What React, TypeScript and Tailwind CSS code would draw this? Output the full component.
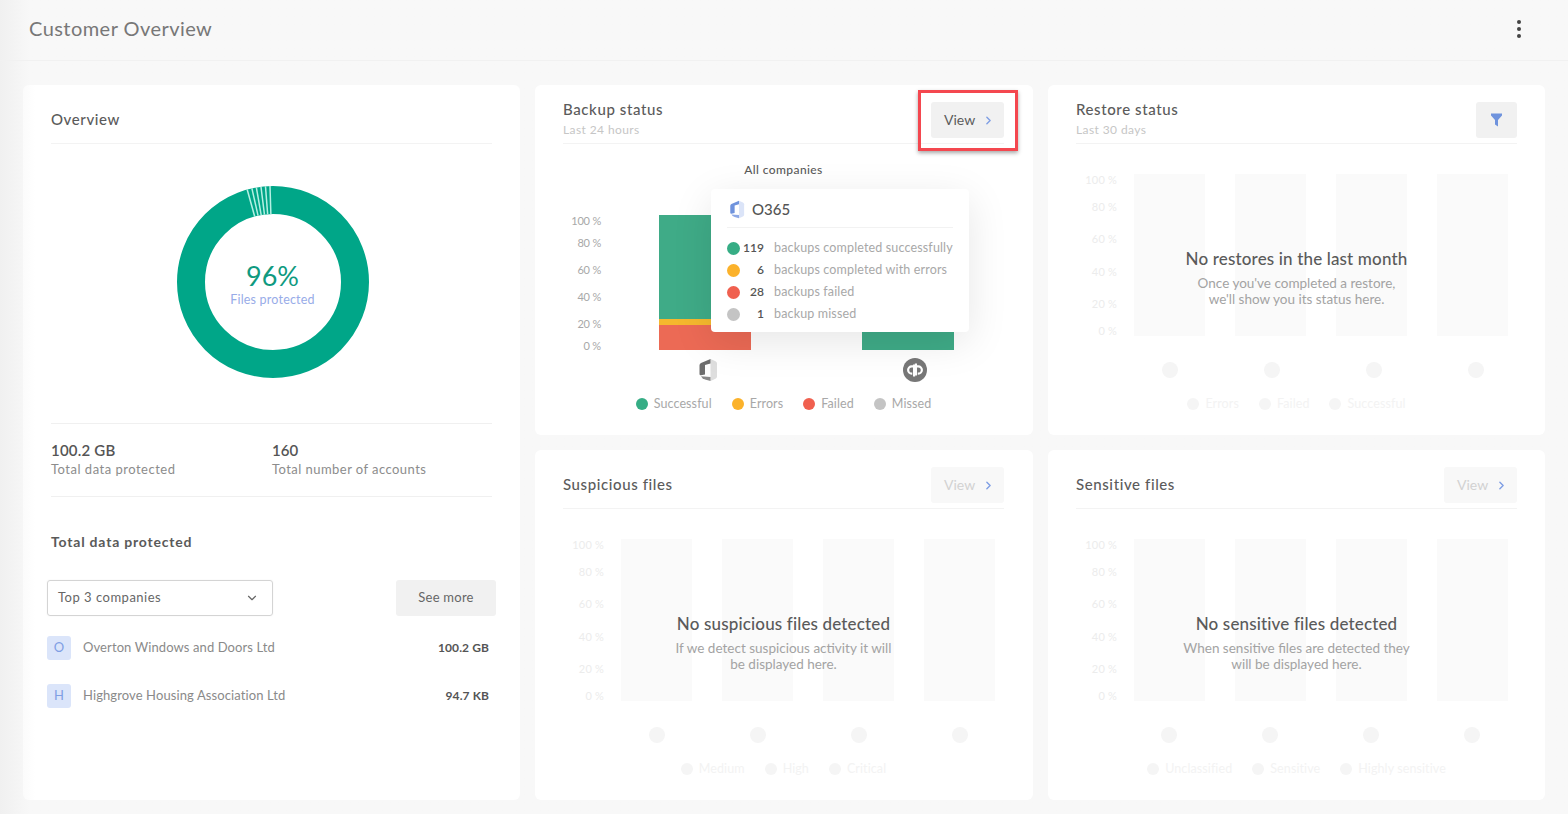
import React from "react";
import { ChevronDown, ChevronRight } from "lucide-react";

function OfficeIcon({ dark, mid, light, className }: { dark: string; mid: string; light: string; className: string }) {
  return (
    <svg viewBox="0 0 20 24" className={className}>
      <path d="M12.5 1 L17.5 3.2 Q19 4 19 5.5 V18.5 Q19 20 17.5 20.8 L12.5 23 Z" fill={light} />
      <path d="M12.5 1 L3 5 Q1.5 5.7 1.5 7.2 V16 Q1.5 17.5 3 17.3 L7 16.5 V7 L12.5 5.5 Z" fill={dark} />
      <path d="M3 18.2 L12.5 19 V23 L7 21.5 Q4 20.5 3 18.2 Z" fill={mid} />
    </svg>
  );
}

function Donut() {
  const angles = [1.8, 4.5, 7.2, 10, 12.7, 15.6];
  return (
    <svg viewBox="0 0 192 192" className="w-[192px] h-[192px]">
      <circle cx="96" cy="96" r="82" fill="none" stroke="#00a688" strokeWidth="28" />
      {angles.map((a) => {
        const t = (a * Math.PI) / 180;
        return (
          <line
            key={a}
            x1={96 - 68 * Math.sin(t)}
            y1={96 - 68 * Math.cos(t)}
            x2={96 - 96 * Math.sin(t)}
            y2={96 - 96 * Math.cos(t)}
            stroke="#b4f0e3"
            strokeWidth="1.5"
          />
        );
      })}
    </svg>
  );
}

function Header({ title, sub, children }: { title: string; sub?: string; children?: React.ReactNode }) {
  return (
    <div className="h-[42px] flex justify-between items-start border-b border-[#f3f3f3]">
      <div className={sub ? "-mt-[1px]" : "h-[34px] flex items-center"}>
        <div className="text-[15px] leading-4 text-[#5b5b5b] tracking-[0.6px] font-medium">{title}</div>
        {sub && <div className="mt-[5px] text-[12px] leading-4 text-[#c6c6c6] tracking-[0.4px]">{sub}</div>}
      </div>
      {children}
    </div>
  );
}

function ViewButton({ muted }: { muted?: boolean }) {
  return (
    <div
      className={
        muted
          ? "w-[73px] h-[36px] rounded-[3px] bg-[#f8f8f8] flex items-center pl-[13px] pb-[2px] gap-[7px] text-[14px] text-[#d2d2d2]"
          : "w-[73px] h-[36px] rounded-[3px] bg-[#f1f1f1] flex items-center pl-[13px] pb-[2px] gap-[7px] text-[14px] text-[#5c5c5c]"
      }
    >
      <span>View</span>
      <ChevronRight size={13} color="#7f9ee4" strokeWidth={2.6} className="mt-[2px]" />
    </div>
  );
}

function Axis({ light, width }: { light?: boolean; width: string }) {
  const cls = light ? "text-[#ececec] tracking-[0.2px]" : "text-[#a8a8a8] tracking-[-0.2px]";
  const rows = light
    ? [
        ["100 %", "mt-0"],
        ["80 %", "mt-[15px]"],
        ["60 %", "mt-[20px]"],
        ["40 %", "mt-[21px]"],
        ["20 %", "mt-[20px]"],
        ["0 %", "mt-[15px]"],
      ]
    : [
        ["100 %", "mt-0"],
        ["80 %", "mt-[10px]"],
        ["60 %", "mt-[15px]"],
        ["40 %", "mt-[15px]"],
        ["20 %", "mt-[15px]"],
        ["0 %", "mt-[10px]"],
      ];
  return (
    <div className={`${width} flex flex-col items-end text-[11px] leading-3 ${cls}`}>
      {rows.map(([t, m]) => (
        <div key={t} className={m}>
          {t}
        </div>
      ))}
    </div>
  );
}

function Legend({ items, text }: { items: [string, string][]; text: string }) {
  return (
    <div className="flex justify-center gap-[20px] h-4">
      {items.map(([label, dot]) => (
        <div key={label} className="flex items-center gap-[6px]">
          <span className={`w-3 h-3 rounded-full ${dot}`} />
          <span className={`text-[12.5px] leading-4 tracking-[0.1px] ${text}`}>{label}</span>
        </div>
      ))}
    </div>
  );
}

function GhostChart({
  dotClass,
  legend,
  title,
  lines,
}: {
  dotClass: string;
  legend: string[];
  title: string;
  lines: string[];
}) {
  return (
    <div className="relative pt-[30px]">
      <div className="flex h-[162px]">
        <Axis light width="w-[41px]" />
        <div className="ml-[17px] flex gap-[30px]">
          {[0, 1, 2, 3].map((i) => (
            <div key={i} className="w-[71px] h-full bg-[#fafafa]" />
          ))}
        </div>
      </div>
      <div className={dotClass}>
        {[0, 1, 2, 3].map((i) => (
          <span key={i} className="w-4 h-4 rounded-full bg-[#f5f5f5]" />
        ))}
      </div>
      <div className="mt-[18px]">
        <Legend items={legend.map((l) => [l, "bg-[#f5f5f5]"] as [string, string])} text="text-[#f3f3f3]" />
      </div>
      <div className="absolute left-0 right-0 top-[105px] flex flex-col items-center text-center">
        <div className="text-[17px] leading-[20px] text-[#5a5a5a] tracking-[0.15px] font-medium">{title}</div>
        <div className="mt-[6px] text-[13.5px] leading-4 text-[#a3a3a3]">
          {lines.map((l) => (
            <div key={l}>{l}</div>
          ))}
        </div>
      </div>
    </div>
  );
}

function TipRow({ dot, n, text }: { dot: string; n: string; text: string }) {
  return (
    <div className="h-[22px] flex items-center whitespace-nowrap">
      <span className={`w-[13px] h-[13px] shrink-0 rounded-full ${dot}`} />
      <span className="w-[24px] shrink-0 text-right text-[12px] font-semibold text-[#555]">{n}</span>
      <span className="ml-[10px] text-[12.5px] text-[#a8a8a8] tracking-[0.15px]">{text}</span>
    </div>
  );
}

function Company({ letter, name, size }: { letter: string; name: string; size: string }) {
  return (
    <div className="h-[24px] flex items-center -ml-1 mr-[3px]">
      <div className="w-[24px] h-[24px] rounded-[3px] bg-[#dbe5fa] flex items-center justify-center text-[13px] text-[#7f9ee4]">
        {letter}
      </div>
      <div className="ml-3 text-[13px] text-[#8a8a8a] tracking-[0.1px]">{name}</div>
      <div className="ml-auto text-[12px] font-bold text-[#555] tracking-[0.1px]">{size}</div>
    </div>
  );
}

export default function App() {
  return (
    <div className="w-full h-[814px] flex flex-col overflow-hidden bg-linear-to-r from-[#f0f0f0] to-[#f8f8f8] to-[30px] font-['Lato',sans-serif]">
      <div className="h-[61px] shrink-0 border-b border-[#f1f1f1] pl-[29px] pr-[47px] pb-[2px] flex items-center justify-between">
        <div className="mb-[2px] text-[20px] text-[#777] tracking-[0.45px]">Customer Overview</div>
        <div className="flex flex-col gap-[3px]">
          <span className="w-1 h-1 rounded-full bg-[#444]" />
          <span className="w-1 h-1 rounded-full bg-[#444]" />
          <span className="w-1 h-1 rounded-full bg-[#444]" />
        </div>
      </div>

      <div className="pt-[24px] pl-[23px] grid grid-cols-[497px_498px_497px] grid-rows-[350px_350px] gap-[15px]">
        {/* Overview */}
        <div className="row-span-2 bg-linear-to-r from-[#fbfbfb] to-white to-[12px] rounded-[6px] pt-[17px] px-[28px]">
          <Header title="Overview">
            <div className="h-[36px]" />
          </Header>
          <div className="h-[280px] pb-[4px] pl-[2px] flex items-center justify-center border-b border-[#f0f0f0]">
            <div className="relative">
              <Donut />
              <div className="absolute inset-0 flex flex-col items-center justify-center">
                <div className="text-[27px] leading-[30px] text-[#0f9a80] mt-[4px]">96%</div>
                <div className="mt-[2px] text-[12.5px] leading-[14px] text-[#98ace8] tracking-[0.2px]">Files protected</div>
              </div>
            </div>
          </div>
          <div className="h-[73px] flex border-b border-[#f0f0f0] pt-[17px]">
            <div className="w-[221px]">
              <div className="text-[15px] leading-[18px] font-semibold text-[#555] tracking-[0.2px]">100.2 GB</div>
              <div className="mt-[2px] text-[13px] leading-4 text-[#8c8c8c] tracking-[0.5px]">Total data protected</div>
            </div>
            <div>
              <div className="text-[15px] leading-[18px] font-semibold text-[#555]">160</div>
              <div className="mt-[2px] text-[13px] leading-4 text-[#8c8c8c] tracking-[0.45px]">Total number of accounts</div>
            </div>
          </div>
          <div className="mt-[36px] text-[14px] leading-[18px] font-bold text-[#5a5a5a] tracking-[0.8px]">Total data protected</div>
          <div className="mt-[29px] flex justify-between -mx-1">
            <div className="w-[226px] h-[36px] border border-[#d4d4d4] rounded-[3px] flex items-center justify-between pl-[10px] pr-[13px] text-[13px] text-[#666] tracking-[0.5px] shadow-[0_0_2px_rgba(0,0,0,0.06)]">
              <span>Top 3 companies</span>
              <ChevronDown size={14} color="#666" />
            </div>
            <div className="w-[100px] h-[36px] bg-[#f1f1f1] rounded-[3px] flex items-center justify-center text-[13px] text-[#666] tracking-[0.25px]">
              See more
            </div>
          </div>
          <div className="mt-[20px] flex flex-col gap-[24px]">
            <Company letter="O" name="Overton Windows and Doors Ltd" size="100.2 GB" />
            <Company letter="H" name="Highgrove Housing Association Ltd" size="94.7 KB" />
          </div>
        </div>

        {/* Backup status */}
        <div className="relative bg-white rounded-[6px] pt-[17px] pl-[28px] pr-[29px]">
          <Header title="Backup status" sub="Last 24 hours">
            <ViewButton />
          </Header>
          <div className="relative pt-[18px]">
            <div className="h-4 text-center text-[12px] leading-4 font-medium text-[#5a5a5a] tracking-[0.4px]">All companies</div>
            <div className="mt-[37px] flex h-[135px]">
              <Axis width="w-[38px]" />
              <div className="ml-[58px] flex items-end gap-[111px]">
                <div className="w-[92px] h-full flex flex-col">
                  <div className="h-[104px] bg-[#3fab87]" />
                  <div className="h-[6px] bg-[#f5b82e]" />
                  <div className="h-[25px] bg-[#ec6a55]" />
                </div>
                <div className="w-[92px] h-full bg-[#3fab87]" />
              </div>
            </div>
            <div className="mt-[8px] h-6 flex">
              <div className="ml-[133px] w-6 h-6 flex items-center justify-center">
                <OfficeIcon dark="#6e6e6e" mid="#8a8a8a" light="#dedede" className="w-[20px] h-[24px]" />
              </div>
              <div className="ml-[183px] w-6 h-6 rounded-full bg-[#777] flex items-center justify-center">
                <svg viewBox="0 0 24 24" className="w-[22px] h-[22px]" fill="none" stroke="#fff" strokeWidth="2.4">
                  <path d="M11 6V19M11 8H8.5a4 4 0 0 0 0 8H9" />
                  <path d="M13 5V18M13 8H15.5a4 4 0 0 1 0 8H15" />
                </svg>
              </div>
            </div>
            <div className="mt-[14px]">
              <Legend
                text="text-[#a8a8a8]"
                items={[
                  ["Successful", "bg-[#36ad85]"],
                  ["Errors", "bg-[#fbb22b]"],
                  ["Failed", "bg-[#f0604f]"],
                  ["Missed", "bg-[#c4c4c4]"],
                ]}
              />
            </div>
            <div className="absolute left-[148px] top-[45px] w-[258px] h-[143px] bg-white rounded-[4px] shadow-[0_10px_40px_rgba(0,0,0,0.1)] px-[16px]">
              <div className="h-[39px] pt-[3px] flex items-center border-b border-[#f2f2f2] gap-[7px] pl-[2px]">
                <OfficeIcon dark="#6f93dd" mid="#8ea9e6" light="#dbe4f8" className="w-[16px] h-[19px]" />
                <span className="text-[15px] font-medium text-[#555]">O365</span>
              </div>
              <div className="mt-[9px]">
                <TipRow dot="bg-[#36ad85]" n="119" text="backups completed successfully" />
                <TipRow dot="bg-[#fbb22b]" n="6" text="backups completed with errors" />
                <TipRow dot="bg-[#f0604f]" n="28" text="backups failed" />
                <TipRow dot="bg-[#c4c4c4]" n="1" text="backup missed" />
              </div>
            </div>
          </div>
          <div className="absolute left-[383px] top-[5px] w-[100px] h-[61px] border-[3px] border-[#f4474f] shadow-[0_2px_4px_rgba(0,0,0,0.35)]" />
        </div>

        {/* Restore status */}
        <div className="bg-white rounded-[6px] pt-[17px] px-[28px]">
          <Header title="Restore status" sub="Last 30 days">
            <div className="w-[41px] h-[36px] rounded-[3px] bg-[#f1f1f1] flex items-center justify-center">
              <svg viewBox="0 0 12 14" className="w-[13px] h-[14px]" fill="#6f93dd">
                <path d="M0.5 0.5H11.5V2.5L7.5 7V13.5L4.5 11.5V7L0.5 2.5Z" />
              </svg>
            </div>
          </Header>
          <GhostChart
            dotClass="mt-[26px] ml-[86px] flex gap-[86px]"
            legend={["Errors", "Failed", "Successful"]}
            title="No restores in the last month"
            lines={["Once you've completed a restore,", "we'll show you its status here."]}
          />
        </div>

        {/* Suspicious files */}
        <div className="bg-white rounded-[6px] pt-[17px] pl-[28px] pr-[29px]">
          <Header title="Suspicious files">
            <ViewButton muted />
          </Header>
          <GhostChart
            dotClass="mt-[26px] ml-[86px] flex gap-[85px]"
            legend={["Medium", "High", "Critical"]}
            title="No suspicious files detected"
            lines={["If we detect suspicious activity it will", "be displayed here."]}
          />
        </div>

        {/* Sensitive files */}
        <div className="bg-white rounded-[6px] pt-[17px] px-[28px]">
          <Header title="Sensitive files">
            <ViewButton muted />
          </Header>
          <GhostChart
            dotClass="mt-[26px] ml-[85px] flex gap-[85px]"
            legend={["Unclassified", "Sensitive", "Highly sensitive"]}
            title="No sensitive files detected"
            lines={["When sensitive files are detected they", "will be displayed here."]}
          />
        </div>
      </div>
    </div>
  );
}
